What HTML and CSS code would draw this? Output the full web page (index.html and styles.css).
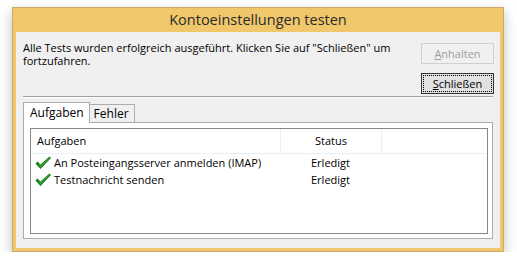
FILE: index.html
```html
<!DOCTYPE html>
<html lang="de">
<head>
    <meta charset="UTF-8">
    <title>Kontoeinstellungen testen</title>
    <link rel="stylesheet" href="styles.css">
</head>
<body>

    <div class="window">
        <div class="titlebar">Kontoeinstellungen testen</div>
        <div class="client">
            <div class="top">
                <p class="message">Alle Tests wurden erfolgreich ausgeführt. Klicken Sie auf "Schließen" um fortzufahren.</p>
                <div class="buttons">
                    <button class="btn disabled"><u>A</u>nhalten</button>
                    <button class="btn default"><span class="focus"><u>S</u>chließen</span></button>
                </div>
            </div>
            <div class="separator"></div>

            <div class="tabs">
                <div class="tab active">Aufgaben</div>
                <div class="tab">Fehler</div>
            </div>
            <div class="panel">
                <div class="list">
                    <div class="list-head">
                        <div class="col col-task">Aufgaben</div>
                        <div class="col col-status">Status</div>
                        <div class="col col-rest"></div>
                    </div>
                    <div class="row">
                        <div class="col col-task">
                            <svg class="check" width="17" height="14" viewBox="0 0 17 14">
                                <polygon points="0.5,7.5 2.5,5.5 5.5,8.5 14.5,0.5 16,2 5.5,13" fill="#0f7d12"/>
                                <polygon points="2.5,6.5 5.5,9.5 14.5,1.5 15,2 5.5,11.5" fill="#3ea33c"/>
                            </svg>
                            An Posteingangsserver anmelden (IMAP)
                        </div>
                        <div class="col col-status">Erledigt</div>
                    </div>
                    <div class="row">
                        <div class="col col-task">
                            <svg class="check" width="17" height="14" viewBox="0 0 17 14">
                                <polygon points="0.5,7.5 2.5,5.5 5.5,8.5 14.5,0.5 16,2 5.5,13" fill="#0f7d12"/>
                                <polygon points="2.5,6.5 5.5,9.5 14.5,1.5 15,2 5.5,11.5" fill="#3ea33c"/>
                            </svg>
                            Testnachricht senden
                        </div>
                        <div class="col col-status">Erledigt</div>
                    </div>
                </div>
            </div>
        </div>
    </div>

</body>
</html>
```

FILE: styles.css
```css
body {
    margin: 0;
    background-color: #ffffff;
    font-family: 'Open Sans', 'Noto Sans', sans-serif;
    font-size: 11px;
    color: #000;
}

.window {
    box-sizing: border-box;
    width: 492px;
    height: 245px;
    margin: 7px 0 0 12px;
    background-color: #f0c76b;
    border: 1px solid #c8ab6c;
    padding: 0 3px 3px 3px;
    display: flex;
    flex-direction: column;
    box-shadow: 0 5px 12px rgba(0, 0, 0, 0.25);
}

.titlebar {
    height: 24px;
    line-height: 23px;
    text-align: center;
    font-size: 14.5px;
    color: #2b2b2b;
}

.client {
    flex: 1;
    background-color: #f0f0f0;
    padding: 0 6px 0 7px;
    display: flex;
    flex-direction: column;
}

.top {
    display: flex;
    justify-content: space-between;
    height: 64px;
}

.message {
    margin: 9px 0 0 0;
    width: 380px;
    line-height: 13px;
}

.buttons {
    display: flex;
    flex-direction: column;
    gap: 9px;
    padding-top: 11px;
}

.btn {
    box-sizing: border-box;
    width: 73px;
    height: 21px;
    padding: 0;
    font-family: inherit;
    font-size: 11px;
    background-color: #e1e1e1;
    border: 1px solid #adadad;
}

.btn.disabled {
    background-color: #f0f0f0;
    border-color: #d0d0d0;
    color: #9f9f9f;
}

.btn.default {
    border-color: #333;
    padding: 1px;
}

.btn .focus {
    display: block;
    height: 100%;
    box-sizing: border-box;
    border: 1px dotted #000;
    line-height: 15px;
}

.separator {
    height: 0;
    border-top: 1px solid #a0a0a0;
    border-bottom: 1px solid #fff;
    margin-right: 1px;
}

.tabs {
    display: flex;
    align-items: flex-end;
    margin-top: 4px;
    height: 20px;
    position: relative;
    z-index: 1;
    font-size: 12px;
}

.tab {
    box-sizing: border-box;
    height: 18px;
    line-height: 17px;
    padding: 0 5px 0 4px;
    border: 1px solid #acacac;
    border-bottom: none;
    background-color: #f0f0f0;
}

.tab.active {
    height: 21px;
    margin-bottom: -1px;
    padding: 1px 5px 0 6px;
    background-color: #fff;
}

.tab + .tab {
    margin-left: -1px;
}

.panel {
    box-sizing: border-box;
    height: 117px;
    margin-right: 1px;
    border: 1px solid #acacac;
    background-color: #fff;
    padding: 5px 4px 4px 6px;
}

.list {
    height: 100%;
    box-sizing: border-box;
    border: 1px solid #828790;
}

.list-head {
    display: flex;
    height: 24px;
    border-bottom: 1px solid #e6eef7;
    margin-right: 1px;
}

.list-head .col {
    line-height: 24px;
}

.list-head .col-status,
.list-head .col-rest {
    border-left: 1px solid #e6eef7;
}

.col-task {
    width: 249px;
    padding-left: 6px;
    box-sizing: border-box;
    display: flex;
    align-items: center;
}

.col-status {
    width: 100px;
    text-align: center;
}

.col-rest {
    flex: 1;
}

.row {
    display: flex;
    height: 17px;
    line-height: 17px;
}

.row:first-of-type {
    margin-top: 1px;
}

.row .col-task {
    padding-left: 4px;
}

.row .col-status {
    text-align: left;
    padding-left: 31px;
    box-sizing: border-box;
}

.check {
    margin-right: 2px;
    flex-shrink: 0;
}
```
